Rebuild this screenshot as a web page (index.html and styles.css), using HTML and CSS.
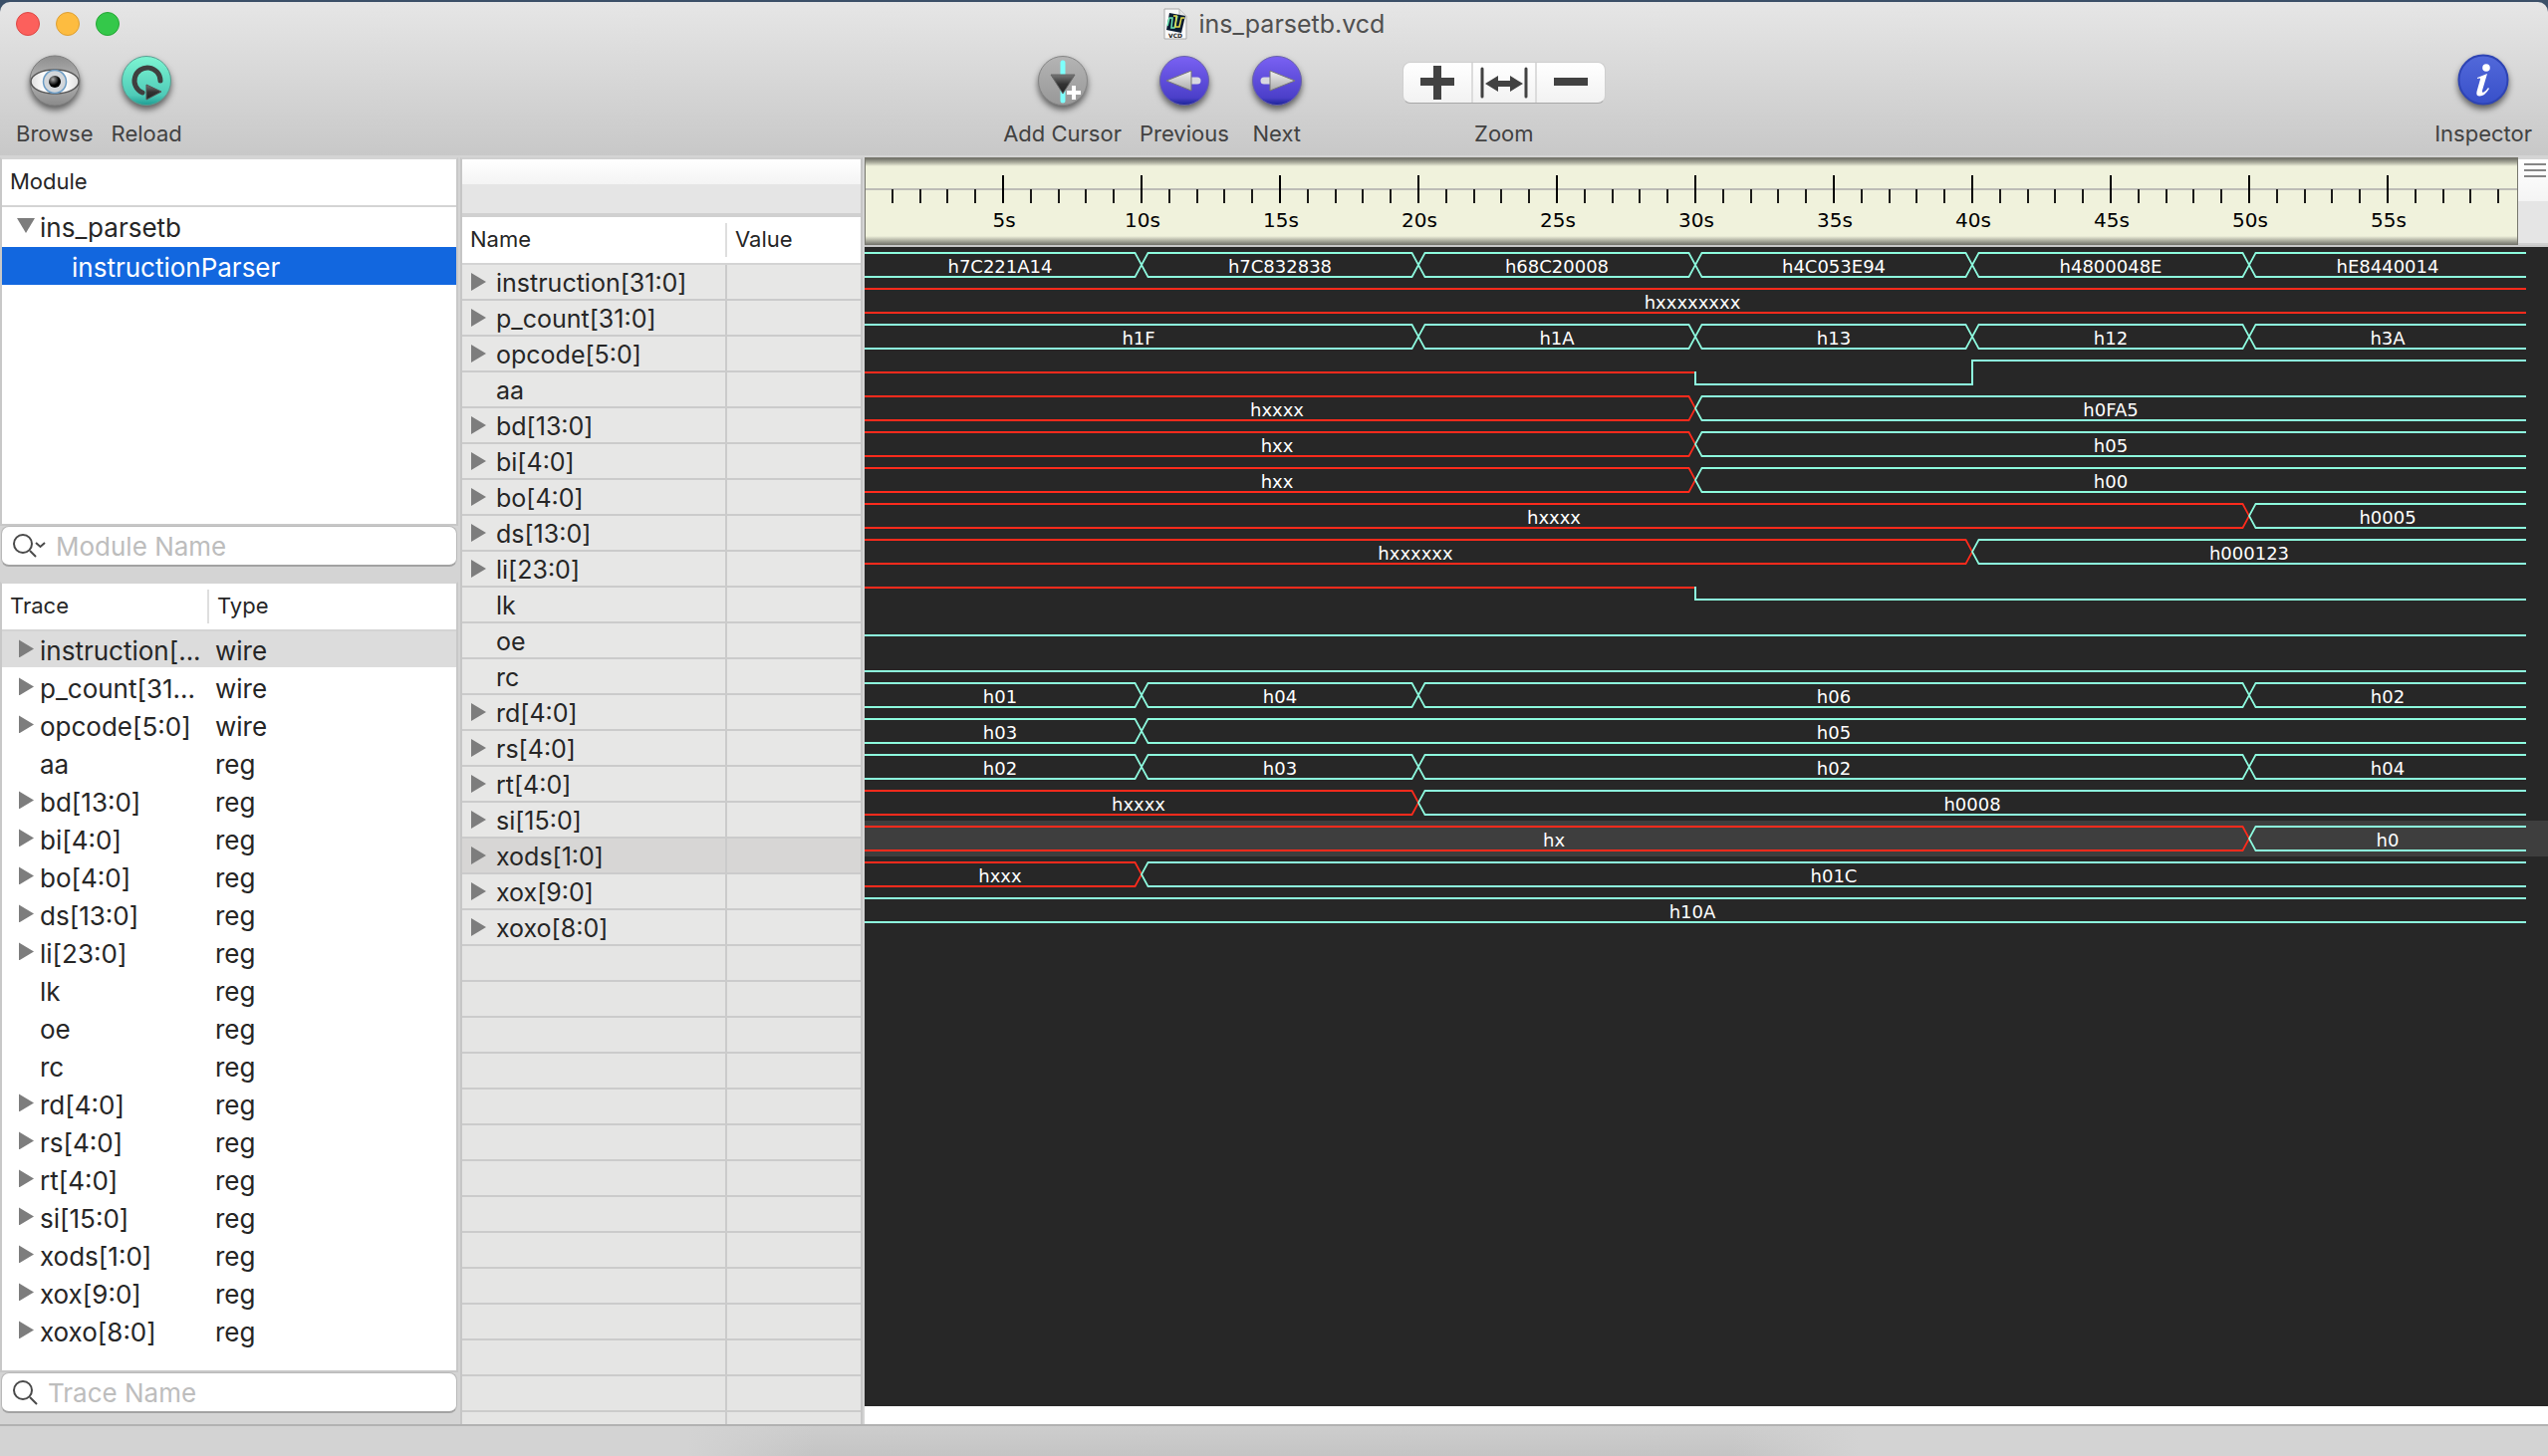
FILE: index.html
```html
<!DOCTYPE html>
<html lang="en">
<head>
<meta charset="utf-8">
<meta name="viewport" content="width=device-width, initial-scale=1">
<title>ins_parsetb.vcd</title>
<link rel="stylesheet" href="styles.css">
</head>
<body>
<div class="window">
  <header class="titlebar">
    <div class="title-row">
      <div class="lights"><button class="light close"></button><button class="light minimise"></button><button class="light full"></button></div>
      <h1 class="title">
        <svg class="doc-icon" viewBox="0 0 24 32" aria-hidden="true">
          <path d="M1 1h15l7 7v23H1z" fill="#fafafa" stroke="#a9a9a9"/>
          <path d="M16 1v7h7" fill="#e4e4e4" stroke="#b4b4b4"/>
          <path d="M6 5l16 3-4 17-15-3z" fill="#0b1d33"/>
          <path d="M4 18l2-8h3l-1 10h3l3-12" fill="none" stroke="#6fe6b4" stroke-width="1.500"/>
          <path d="M10 8h3l-1 11h4l2-9h3" fill="none" stroke="#e8dc4a" stroke-width="1.500"/>
          <text x="12" y="30" text-anchor="middle" class="doc-text">VCD</text>
        </svg>
        ins_parsetb.vcd
      </h1>
      <div></div>
    </div>
    <div class="toolbar">
      <div class="tools">
        <button class="tool">
          <svg class="tool-icon" viewBox="0 0 64 64" aria-hidden="true">
            <defs>
              <linearGradient id="grey" x1="0" y1="0" x2="0" y2="1"><stop offset="0" stop-color="#8e8e8e"/><stop offset=".5" stop-color="#b4b4b4"/><stop offset="1" stop-color="#8a8a8a"/></linearGradient>
              <linearGradient id="eye" x1="0" y1="0" x2="1" y2="0"><stop offset="0" stop-color="#dedede"/><stop offset=".3" stop-color="#fff"/><stop offset=".7" stop-color="#fff"/><stop offset="1" stop-color="#dedede"/></linearGradient>
              <radialGradient id="pupil" cx=".35" cy=".3" r=".5"><stop offset="0" stop-color="#aaa"/><stop offset="1" stop-color="#000"/></radialGradient>
            </defs>
            <circle cx="32" cy="32" r="25" fill="url(#grey)" stroke="#7d7d7d"/>
            <path d="M8 33c0-7 11-12 24-12s24 5 24 12-11 12-24 12S8 40 8 33z" fill="url(#eye)" stroke="#555" stroke-width="1.5"/>
            <circle cx="32" cy="33" r="11.5" fill="#d2d6da" stroke="#6c9cc4" stroke-width="1.5"/>
            <circle cx="32" cy="33" r="6" fill="url(#pupil)"/>
          </svg>
          <span>Browse</span>
        </button>
        <button class="tool">
          <svg class="tool-icon" viewBox="0 0 64 64" aria-hidden="true">
            <defs>
              <linearGradient id="teal" x1="0" y1="0" x2="0" y2="1"><stop offset="0" stop-color="#7df5d2"/><stop offset=".8" stop-color="#4fcbb8"/><stop offset="1" stop-color="#1d9c93"/></linearGradient>
              <linearGradient id="dark" x1="0" y1="0" x2="0" y2="1"><stop offset="0" stop-color="#777"/><stop offset=".5" stop-color="#333"/><stop offset="1" stop-color="#222"/></linearGradient>
            </defs>
            <circle cx="32" cy="32" r="24.5" fill="url(#teal)" stroke="#5c9d91"/>
            <path d="M28 44A13 13 0 1 1 46 32" fill="none" stroke="#3f3f3f" stroke-width="5" stroke-linecap="round"/>
            <path d="M32 36l15 7-15 8z" fill="url(#dark)" stroke="#555"/>
          </svg>
          <span>Reload</span>
        </button>
      </div>
      <div class="tools cursor-tools">
        <button class="tool">
          <svg class="tool-icon" viewBox="0 0 64 64" aria-hidden="true">
            <defs><linearGradient id="silver" x1="0" y1="0" x2="0" y2="1"><stop offset="0" stop-color="#b4b4b4"/><stop offset="1" stop-color="#989898"/></linearGradient></defs>
            <circle cx="32" cy="32" r="24.5" fill="url(#silver)" stroke="#858585"/>
            <path d="M32 14v38" stroke="#7dfffb" stroke-width="5" stroke-linecap="round"/>
            <path d="M20 26h24L32 45z" fill="url(#dark)" stroke="#666"/>
            <path d="M43 37v14M36 44h14" stroke="#fff" stroke-width="4"/>
          </svg>
          <span>Add Cursor</span>
        </button>
        <button class="tool">
          <svg class="tool-icon" viewBox="0 0 64 64" aria-hidden="true">
            <defs>
              <linearGradient id="violet" x1="0" y1="0" x2="0" y2="1"><stop offset="0" stop-color="#7a61f3"/><stop offset=".85" stop-color="#4b3fc9"/><stop offset="1" stop-color="#1a2396"/></linearGradient>
              <linearGradient id="arrow" x1="0" y1="0" x2="0" y2="1"><stop offset="0" stop-color="#f0f0f0"/><stop offset="1" stop-color="#aaa"/></linearGradient>
            </defs>
            <circle cx="32" cy="32" r="24.5" fill="url(#violet)" stroke="#6a64a8"/>
            <path d="M38 32h7" stroke="#d8d8e0" stroke-width="7" stroke-linecap="round"/>
            <path d="M14 32l25-10v20z" fill="url(#arrow)" stroke="#777"/>
          </svg>
          <span>Previous</span>
        </button>
        <button class="tool next">
          <svg class="tool-icon" viewBox="0 0 64 64" aria-hidden="true">
            <circle cx="32" cy="32" r="24.5" fill="url(#violet)" stroke="#6a64a8"/>
            <path d="M19 32h7" stroke="#d8d8e0" stroke-width="7" stroke-linecap="round"/>
            <path d="M50 32L25 22v20z" fill="url(#arrow)" stroke="#777"/>
          </svg>
          <span>Next</span>
        </button>
        <div class="tool zoom">
          <div class="segments">
            <button class="segment"><svg viewBox="0 0 34 34" aria-hidden="true"><path d="M17 0v34M0 16h34" stroke="#424242" stroke-width="8"/></svg></button>
            <button class="segment middle"><svg class="fit" viewBox="0 0 48 34" aria-hidden="true"><path d="M2 3v28M46 3v28" stroke="#424242" stroke-width="3" stroke-linecap="round"/><path d="M5 18L18 10v5h12v-5l13 8-13 8v-5H18v5z" fill="#424242"/></svg></button>
            <button class="segment"><svg viewBox="0 0 34 34" aria-hidden="true"><path d="M0 16h34" stroke="#424242" stroke-width="8"/></svg></button>
          </div>
          <span>Zoom</span>
        </div>
      </div>
      <div class="tools">
        <button class="tool">
          <svg class="tool-icon" viewBox="0 0 64 64" aria-hidden="true">
            <defs><linearGradient id="blue" x1="0" y1="0" x2="0" y2="1"><stop offset="0" stop-color="#5269da"/><stop offset="1" stop-color="#3850c9"/></linearGradient></defs>
            <circle cx="32" cy="31" r="24.5" fill="url(#blue)" stroke="#2e44b4" stroke-width="2"/>
            <circle cx="35" cy="19" r="3.8" fill="#fff"/>
            <path d="M26 29q5-2 10-4l-5 17q-.500 2.500 1.500 1.500 2.500-1.500 4.500-4.500l1 1q-4.500 7.500-9.500 7.500-4 0-3-4.500l3.500-12.500q.5-1.500-3-.5z" fill="#fff"/>
          </svg>
          <span>Inspector</span>
        </button>
      </div>
    </div>
  </header>

  <main class="content">
    <aside class="sidebar">
      <section class="panel modules">
        <h2 class="panel-head">Module</h2>
        <ul class="tree">
          <li class="node open">ins_parsetb</li>
          <li class="node child selected">instructionParser</li>
        </ul>
      </section>
      <label class="search">
        <svg class="glass wide" viewBox="0 0 34 26" aria-hidden="true"><circle cx="11" cy="11" r="9" fill="none" stroke="#4a4a4a" stroke-width="2"/><path d="M18 18l6 6" stroke="#4a4a4a" stroke-width="2"/><path d="M24 10l4.500 4 4.500-4" fill="none" stroke="#4a4a4a" stroke-width="2"/></svg>
        <input type="search" placeholder="Module Name">
      </label>
      <section class="panel traces">
        <table class="trace-table">
          <thead><tr><th class="col-trace">Trace</th><th>Type</th></tr></thead>
          <tbody>
            <tr class="bus selected"><td>instruction[...</td><td>wire</td></tr>
            <tr class="bus"><td>p_count[31...</td><td>wire</td></tr>
            <tr class="bus"><td>opcode[5:0]</td><td>wire</td></tr>
            <tr><td>aa</td><td>reg</td></tr>
            <tr class="bus"><td>bd[13:0]</td><td>reg</td></tr>
            <tr class="bus"><td>bi[4:0]</td><td>reg</td></tr>
            <tr class="bus"><td>bo[4:0]</td><td>reg</td></tr>
            <tr class="bus"><td>ds[13:0]</td><td>reg</td></tr>
            <tr class="bus"><td>li[23:0]</td><td>reg</td></tr>
            <tr><td>lk</td><td>reg</td></tr>
            <tr><td>oe</td><td>reg</td></tr>
            <tr><td>rc</td><td>reg</td></tr>
            <tr class="bus"><td>rd[4:0]</td><td>reg</td></tr>
            <tr class="bus"><td>rs[4:0]</td><td>reg</td></tr>
            <tr class="bus"><td>rt[4:0]</td><td>reg</td></tr>
            <tr class="bus"><td>si[15:0]</td><td>reg</td></tr>
            <tr class="bus"><td>xods[1:0]</td><td>reg</td></tr>
            <tr class="bus"><td>xox[9:0]</td><td>reg</td></tr>
            <tr class="bus"><td>xoxo[8:0]</td><td>reg</td></tr>
          </tbody>
        </table>
      </section>
      <label class="search">
        <svg class="glass" viewBox="0 0 26 26" aria-hidden="true"><circle cx="11" cy="11" r="9" fill="none" stroke="#4a4a4a" stroke-width="2"/><path d="M18 18l7 7" stroke="#4a4a4a" stroke-width="2"/></svg>
        <input type="search" placeholder="Trace Name">
      </label>
    </aside>

    <section class="signals">
      <div class="signals-bar"></div>
      <table class="signal-table">
        <thead><tr><th class="col-name">Name</th><th>Value</th></tr></thead>
        <tbody>
          <tr class="bus"><td>instruction[31:0]</td><td></td></tr>
          <tr class="bus"><td>p_count[31:0]</td><td></td></tr>
          <tr class="bus"><td>opcode[5:0]</td><td></td></tr>
          <tr><td>aa</td><td></td></tr>
          <tr class="bus"><td>bd[13:0]</td><td></td></tr>
          <tr class="bus"><td>bi[4:0]</td><td></td></tr>
          <tr class="bus"><td>bo[4:0]</td><td></td></tr>
          <tr class="bus"><td>ds[13:0]</td><td></td></tr>
          <tr class="bus"><td>li[23:0]</td><td></td></tr>
          <tr><td>lk</td><td></td></tr>
          <tr><td>oe</td><td></td></tr>
          <tr><td>rc</td><td></td></tr>
          <tr class="bus"><td>rd[4:0]</td><td></td></tr>
          <tr class="bus"><td>rs[4:0]</td><td></td></tr>
          <tr class="bus"><td>rt[4:0]</td><td></td></tr>
          <tr class="bus"><td>si[15:0]</td><td></td></tr>
          <tr class="bus selected"><td>xods[1:0]</td><td></td></tr>
          <tr class="bus"><td>xox[9:0]</td><td></td></tr>
          <tr class="bus"><td>xoxo[8:0]</td><td></td></tr>
        </tbody>
      </table>
      <div class="empty-rows"></div>
    </section>

    <section class="viewer">
      <div class="ruler-row">
        <div class="ruler">
          <div class="scale">
            <div class="ticks major"></div>
            <div class="ticks minor"></div>
            <div class="times"><span>5s</span><span>10s</span><span>15s</span><span>20s</span><span>25s</span><span>30s</span><span>35s</span><span>40s</span><span>45s</span><span>50s</span><span>55s</span></div>
          </div>
        </div>
        <div class="corner"><button class="grip"></button></div>
      </div>
      <div class="waves">
        <div class="wave"><span class="seg first" style="--t:10">h7C221A14</span><span class="seg" style="--t:10">h7C832838</span><span class="seg" style="--t:10">h68C20008</span><span class="seg" style="--t:10">h4C053E94</span><span class="seg" style="--t:10">h4800048E</span><span class="seg last" style="--t:10">hE8440014</span></div>
        <div class="wave"><span class="seg first last unknown" style="--t:60">hxxxxxxxx</span></div>
        <div class="wave"><span class="seg first" style="--t:20">h1F</span><span class="seg" style="--t:10">h1A</span><span class="seg" style="--t:10">h13</span><span class="seg" style="--t:10">h12</span><span class="seg last" style="--t:10">h3A</span></div>
        <div class="wave"><span class="bit unknown" style="--t:30"></span><span class="bit low half-edge" style="--t:10"></span><span class="bit high edge" style="--t:20"></span></div>
        <div class="wave"><span class="seg first unknown" style="--t:30">hxxxx</span><span class="seg last" style="--t:30">h0FA5</span></div>
        <div class="wave"><span class="seg first unknown" style="--t:30">hxx</span><span class="seg last" style="--t:30">h05</span></div>
        <div class="wave"><span class="seg first unknown" style="--t:30">hxx</span><span class="seg last" style="--t:30">h00</span></div>
        <div class="wave"><span class="seg first unknown" style="--t:50">hxxxx</span><span class="seg last" style="--t:10">h0005</span></div>
        <div class="wave"><span class="seg first unknown" style="--t:40">hxxxxxx</span><span class="seg last" style="--t:20">h000123</span></div>
        <div class="wave"><span class="bit unknown" style="--t:30"></span><span class="bit low half-edge" style="--t:30"></span></div>
        <div class="wave"><span class="bit low" style="--t:60"></span></div>
        <div class="wave"><span class="bit low" style="--t:60"></span></div>
        <div class="wave"><span class="seg first" style="--t:10">h01</span><span class="seg" style="--t:10">h04</span><span class="seg" style="--t:30">h06</span><span class="seg last" style="--t:10">h02</span></div>
        <div class="wave"><span class="seg first" style="--t:10">h03</span><span class="seg last" style="--t:50">h05</span></div>
        <div class="wave"><span class="seg first" style="--t:10">h02</span><span class="seg" style="--t:10">h03</span><span class="seg" style="--t:30">h02</span><span class="seg last" style="--t:10">h04</span></div>
        <div class="wave"><span class="seg first unknown" style="--t:20">hxxxx</span><span class="seg last" style="--t:40">h0008</span></div>
        <div class="wave selected"><span class="seg first unknown" style="--t:50">hx</span><span class="seg last" style="--t:10">h0</span></div>
        <div class="wave"><span class="seg first unknown" style="--t:10">hxxx</span><span class="seg last" style="--t:50">h01C</span></div>
        <div class="wave"><span class="seg first last" style="--t:60">h10A</span></div>
      </div>
      <div class="scroll-track"></div>
    </section>
  </main>
  <footer class="statusbar"></footer>
</div>
</body>
</html>
```
FILE: styles.css
```css
* { box-sizing: border-box; }

body {
  margin: 0;
  background: #3b5068;
  color: #262626;
  font-family: Inter, "Liberation Sans", sans-serif;
}

button {
  margin: 0;
  padding: 0;
  border: 0;
  background: none;
  color: inherit;
  font: inherit;
}

h1, h2, ul {
  margin: 0;
  padding: 0;
  font-weight: 400;
  list-style: none;
}

.window {
  display: flex;
  flex-direction: column;
  min-height: 100vh;
  padding-top: 2px;
}

/* Title bar and toolbar */
.titlebar {
  height: 156px;
  border-bottom: 2px solid #d4d4d4;
  border-radius: 10px 10px 0 0;
  background: linear-gradient(#e6e6e6, #c8c8c8);
  color: #424242;
}

.title-row {
  display: grid;
  grid-template-columns: 1fr auto 1fr;
  align-items: center;
  height: 44px;
  padding: 0 16px;
}

.lights { display: flex; gap: 16px; }

.light {
  width: 24px;
  height: 24px;
  border: 1px solid;
  border-radius: 50%;
}

.close { background: #fc605c; border-color: #dd4744; }
.minimise { background: #fdbc40; border-color: #dd9f33; }
.full { background: #34c84a; border-color: #25a635; }

.title {
  display: flex;
  align-items: center;
  gap: 12px;
  color: #505050;
  font-size: 25px;
  line-height: 32px;
}

.doc-icon { width: 24px; height: 32px; }
.doc-text { font: bold 6px "DejaVu Sans", sans-serif; fill: #222; }

.toolbar {
  display: flex;
  justify-content: space-between;
  padding: 3px 16px 0;
}

.tools { display: flex; gap: 18px; }
.cursor-tools { margin-right: 8px; }

.tool {
  display: flex;
  flex-direction: column;
  align-items: center;
  gap: 7px;
  font-size: 22px;
  line-height: 28px;
}

.tool-icon {
  width: 64px;
  height: 64px;
  margin: 0 -4px;
  filter: drop-shadow(0 4px 3px rgba(0, 0, 0, .55));
}

.next { min-width: 60px; }
.zoom { margin-left: 78px; }

.segments {
  display: flex;
  height: 42px;
  margin: 13px 0 9px;
  border: 1px solid #cfcfcf;
  border-bottom-color: #a8a8a8;
  border-radius: 8px;
  background: linear-gradient(#fff, #f2f2f2);
}

.segment {
  display: grid;
  place-items: center;
  width: 68px;
}

.segment.middle {
  width: 66px;
  border: solid #dcdcdc;
  border-width: 0 2px;
}

.segment svg { width: 34px; height: 34px; }
.segment .fit { width: 48px; }

/* Main split */
.content {
  display: flex;
  flex: 1;
  background: #d4d4d4;
}

.sidebar {
  display: flex;
  flex: none;
  flex-direction: column;
  width: 462px;
  padding-bottom: 11px;
}

.panel {
  width: 460px;
  border: 2px solid #c8c8c8;
  border-top-color: #d4d4d4;
  background: #fff;
}

.modules { flex: 369 0 0; }
.traces { flex: 795 0 0; margin-top: 15px; }

.panel-head, th {
  height: 48px;
  padding: 0 8px 2px;
  border-bottom: 2px solid #d4d4d4;
  font-size: 22px;
  font-weight: 400;
  line-height: 44px;
  text-align: left;
}

.node {
  position: relative;
  height: 38px;
  margin-bottom: 2px;
  padding-left: 38px;
  font-size: 26px;
  line-height: 42px;
}

.node.child { padding-left: 70px; }
.node.selected { background: #1267df; color: #fff; }

.node.open::before {
  content: "";
  position: absolute;
  top: 11px;
  left: 15px;
  width: 18px;
  height: 15px;
  background: #7d7d7d;
  clip-path: polygon(0 0, 100% 0, 50% 100%);
}

.search {
  display: flex;
  align-items: center;
  gap: 10px;
  width: 458px;
  height: 41px;
  margin-left: 1px;
  padding-left: 10px;
  border: 1px solid #b9b9b9;
  border-bottom: 2px solid #a2a2a2;
  border-radius: 8px;
  background: #fff;
}

.glass { flex: none; width: 26px; height: 26px; }
.glass.wide { width: 34px; }

.search input {
  flex: 1;
  min-width: 0;
  padding: 2px 0 0;
  border: 0;
  outline: 0;
  background: none;
  font: 26px/32px Inter, "Liberation Sans", sans-serif;
}

.search input::placeholder { color: #bdbdbd; }

/* Tables */
table {
  width: 100%;
  border-spacing: 0;
  table-layout: fixed;
}

td {
  position: relative;
  white-space: nowrap;
}

th:first-child {
  background: linear-gradient(#dedede, #dedede) no-repeat right center / 2px 34px;
}

.col-trace { width: 208px; }

.trace-table td {
  height: 38px;
  padding: 4px 0 0 6px;
  border-bottom: 2px solid transparent;
  background-clip: padding-box;
  font-size: 26px;
  line-height: 32px;
}

.trace-table td:first-child { padding-left: 38px; }
.trace-table .selected td { background-color: #dcdcdc; }

.bus td:first-child::before {
  content: "";
  position: absolute;
  top: 8px;
  left: 17px;
  width: 15px;
  height: 18px;
  background: #7d7d7d;
  clip-path: polygon(0 0, 100% 50%, 0 100%);
}

.signals {
  display: flex;
  flex: none;
  flex-direction: column;
  width: 404px;
  border: solid #c6c6c6;
  border-width: 2px 2px 0;
  border-top-color: #d0d0d0;
}

.signals-bar {
  height: 58px;
  border-bottom: 4px solid #d0d0d0;
  background: linear-gradient(#fff, #f4f4f4 25px, #e5e5e5 25px);
}

.signal-table th { background-color: #fff; }
.col-name { width: 266px; }

.signal-table td {
  height: 36px;
  padding: 2px 0 0;
  border-bottom: 2px solid #cbcbcb;
  background: #e7e7e6;
  font-size: 25px;
  line-height: 32px;
}

.signal-table td:first-child {
  padding-left: 34px;
  border-right: 2px solid #cbcbcb;
}

.signal-table .bus td:first-child::before { left: 9px; }
.signal-table .selected td { background: #d7d6d5; }

.empty-rows {
  flex: 1;
  background:
    linear-gradient(#cbcbcb, #cbcbcb) no-repeat 264px 0 / 2px 100%,
    repeating-linear-gradient(#e5e5e4 0 34px, #cbcbcb 34px 36px);
}

/* Time ruler */
.viewer {
  display: flex;
  flex: 1;
  flex-direction: column;
  min-width: 0;
  margin-left: 2px;
}

.ruler-row {
  display: flex;
  height: 90px;
  border-bottom: 2px solid #c8c8c8;
}

.ruler {
  flex: 1;
  overflow: hidden;
  border: 1px solid #77776e;
  background:
    linear-gradient(#6f6f67, #a9aa9b 4px, #f0f2dc 8px, transparent 8px),
    linear-gradient(to top, #7c7c74, #b5b6a7 4px, #f0f2dc 8px, transparent 8px),
    linear-gradient(#bdbdb6, #bdbdb6) no-repeat 0 30px / 100% 2px,
    #f0f2dc;
}

/* The scale spans the full minute, the same width as the waveforms below. */
.scale { width: calc(100% + 10px); }

.ticks { height: 14px; }

.major {
  margin-top: 17px;
  background: repeating-linear-gradient(to right, transparent 0 calc(100% / 12 - 2px), #000 calc(100% / 12 - 2px) calc(100% / 12));
}

.minor {
  background:
    repeating-linear-gradient(to right, transparent 0 calc(100% / 12 - 2px), #000 calc(100% / 12 - 2px) calc(100% / 12)),
    repeating-linear-gradient(to right, transparent 0 calc(100% / 60 - 2px), #1c1c1a calc(100% / 60 - 2px) calc(100% / 60));
}

.times {
  display: flex;
  padding: 3px calc(100% / 24);
  color: #000;
  font: 20px/28px "DejaVu Sans", sans-serif;
  text-align: center;
}

.times span { flex: 1; }

.corner {
  width: 30px;
  border-bottom: 2px solid #d0d0d0;
  background: linear-gradient(#d4d4d4 2px, #fff 2px, #f4f4f4 44px, #e5e5e5 44px);
}

.grip {
  display: block;
  width: 22px;
  height: 14px;
  margin: 6px 0 0 6px;
  background: repeating-linear-gradient(#858585 0 2px, transparent 2px 6px);
}

/* Waveforms */
.waves {
  flex: 1;
  background: #272727;
  color: #fff;
  font: 18px/30px "DejaVu Sans", sans-serif;
}

.wave {
  display: flex;
  height: 36px;
  padding: 5px 22px 5px 0;
}

.wave.selected { background: #3e3e3e; }

.seg, .bit {
  --line: #8dfbde;
  position: relative;
  flex: var(--t) 0 0;
  min-width: 0;
}

.seg.unknown, .bit.unknown { --line: #ff2b1c; }

.seg {
  --lo: 7px;
  --li: 8px;
  --lt: 2px;
  --ro: 7px;
  --ri: 8px;
  --rt: 2px;
  text-align: center;
}

.seg.first { --lo: 0px; --li: 0px; --lt: 0px; text-indent: -6px; }
.seg.last { --ro: 0px; --ri: 0px; --rt: 0px; }

/* Hexagonal outline: outer ring, then the inner hole. */
.seg::before {
  content: "";
  position: absolute;
  inset: 0 -1px;
  background: var(--line);
  clip-path: polygon(evenodd,
    var(--lo) 0, calc(100% - var(--ro)) 0, 100% 50%, calc(100% - var(--ro)) 100%, var(--lo) 100%, 0 50%, var(--lo) 0,
    var(--li) 2px, calc(100% - var(--ri)) 2px, calc(100% - var(--rt)) 50%, calc(100% - var(--ri)) calc(100% - 2px), var(--li) calc(100% - 2px), var(--lt) 50%, var(--li) 2px);
}

.seg.first::before { left: 0; }
.seg.last::before { right: 0; }

.bit.low { border-bottom: 2px solid var(--line); }
.bit.high { border-top: 2px solid var(--line); }

.bit.unknown {
  height: 14px;
  border-bottom: 2px solid var(--line);
}

.edge::before, .half-edge::before {
  content: "";
  position: absolute;
  top: -2px;
  bottom: -2px;
  left: -1px;
  width: 2px;
  background: var(--line);
}

.edge::before { bottom: 0; }
.half-edge::before { top: 12px; }

.scroll-track { height: 18px; background: #fff; }

.statusbar {
  height: 32px;
  border-top: 2px solid #b2b2b2;
  background:
    linear-gradient(to right, #d3d3d3 27%, transparent 32%, transparent 68%, #d3d3d3 73%),
    linear-gradient(#cdcdcd, #c4c4c4);
}
```
